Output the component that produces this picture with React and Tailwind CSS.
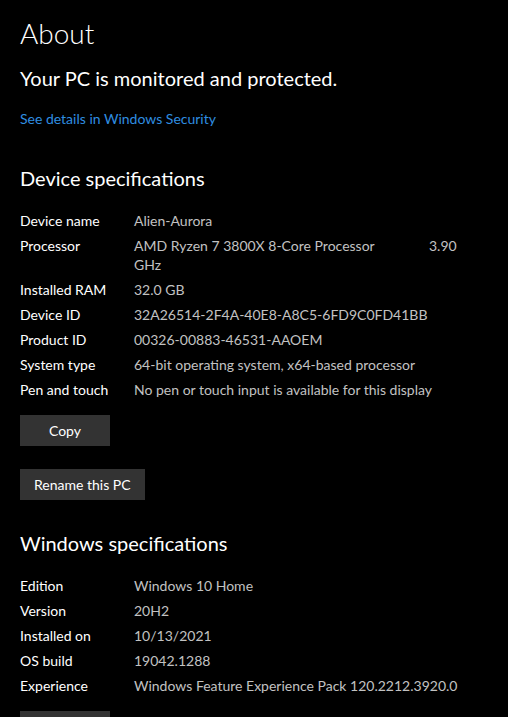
import React from 'react';

const deviceSpecs = [
    { label: 'Device name', value: 'Alien-Aurora' },
    { label: 'Processor', value: 'cpu' },
    { label: 'Installed RAM', value: '32.0 GB' },
    { label: 'Device ID', value: '32A26514-2F4A-40E8-A8C5-6FD9C0FD41BB' },
    { label: 'Product ID', value: '00326-00883-46531-AAOEM' },
    { label: 'System type', value: '64-bit operating system, x64-based processor' },
    { label: 'Pen and touch', value: 'No pen or touch input is available for this display' },
];

const windowsSpecs = [
    { label: 'Edition', value: 'Windows 10 Home' },
    { label: 'Version', value: '20H2' },
    { label: 'Installed on', value: '10/13/2021' },
    { label: 'OS build', value: '19042.1288' },
    { label: 'Experience', value: 'Windows Feature Experience Pack 120.2212.3920.0' },
];

const SpecRow = ({ label, value }) => (
    <div className="flex leading-[19px]">
        <div className="w-[114px] shrink-0 text-white">{label}</div>
        <div className="text-[#c2c2c2]">
            {value === 'cpu' ? (
                <>
                    <div className="flex">
                        <span className="w-[295px]">AMD Ryzen 7 3800X 8-Core Processor</span>
                        <span>3.90</span>
                    </div>
                    <div>GHz</div>
                </>
            ) : value}
        </div>
    </div>
);

const Button = ({ children, className = '' }) => (
    <button className={`h-[31px] bg-[#333333] text-white text-[14px] px-[14px] ${className}`}>
        {children}
    </button>
);

export default function App() {
    return (
        <div
            className="w-[508px] h-[717px] overflow-hidden bg-black text-white px-5"
            style={{ fontFamily: '"Segoe UI", Lato, "Noto Sans", sans-serif' }}
        >
            <h1 className="pt-[13px] text-[28px] font-light leading-[40px]">About</h1>

            <p className="mt-[12px] text-[20px] leading-[26px]">Your PC is monitored and protected.</p>
            <a className="block mt-[18px] text-[14px] leading-[19px] text-[#2f8ee0]">See details in Windows Security</a>

            <h2 className="mt-[37px] text-[20px] leading-[26px]">Device specifications</h2>

            <div className="mt-[20px] flex flex-col gap-[6px] text-[14px]">
                {deviceSpecs.map((s) => <SpecRow key={s.label} {...s} />)}
            </div>

            <div className="mt-[16px] flex flex-col items-start gap-[23px]">
                <Button className="w-[90px]">Copy</Button>
                <Button>Rename this PC</Button>
            </div>

            <h2 className="mt-[30px] text-[20px] leading-[26px]">Windows specifications</h2>

            <div className="mt-[20px] flex flex-col gap-[6px] text-[14px]">
                {windowsSpecs.map((s) => <SpecRow key={s.label} {...s} />)}
            </div>

            <div className="mt-[16px]">
                <Button className="w-[90px]">Copy</Button>
            </div>
        </div>
    );
}
